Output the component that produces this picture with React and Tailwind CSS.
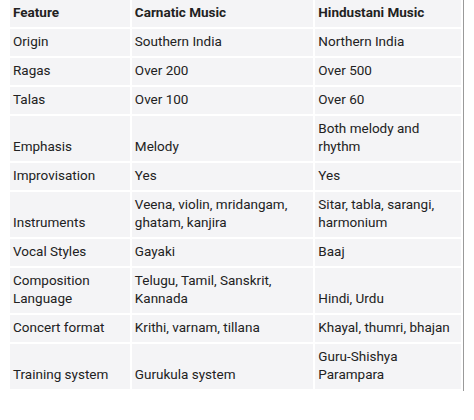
import React from 'react';

const rows = [
  ['Origin', 'Southern India', 'Northern India'],
  ['Ragas', 'Over 200', 'Over 500'],
  ['Talas', 'Over 100', 'Over 60'],
  ['Emphasis', 'Melody', 'Both melody and rhythm'],
  ['Improvisation', 'Yes', 'Yes'],
  ['Instruments', 'Veena, violin, mridangam, ghatam, kanjira', 'Sitar, tabla, sarangi, harmonium'],
  ['Vocal Styles', 'Gayaki', 'Baaj'],
  ['Composition Language', 'Telugu, Tamil, Sanskrit, Kannada', 'Hindi, Urdu'],
  ['Concert format', 'Krithi, varnam, tillana', 'Khayal, thumri, bhajan'],
  ['Training system', 'Gurukula system', 'Guru-Shishya Parampara'],
];

const cell = 'bg-[#f4f4f6] align-bottom text-left pl-[3px] pr-[3px] pt-[3px] pb-[6px] leading-[18px]';

const App = () => {
  return (
    <div className="w-[474px] h-[420px] bg-white overflow-hidden" style={{ fontFamily: 'Roboto, "Liberation Sans", sans-serif' }}>
      {/* comparison table */}
      <div className="ml-[8px] -mt-[2px] w-[456px] border-r border-[#9a9a9a]">
        <table className="border-separate border-spacing-[2px] text-[13.5px] text-[#222]">
          <colgroup>
            <col className="w-[120px]" />
            <col className="w-[182px]" />
            <col className="w-[146px]" />
          </colgroup>
          <thead>
            <tr>
              <th className={`${cell} font-bold`}>Feature</th>
              <th className={`${cell} font-bold`}>Carnatic Music</th>
              <th className={`${cell} font-bold`}>Hindustani Music</th>
            </tr>
          </thead>
          <tbody>
            {rows.map((r) => (
              <tr key={r[0]}>
                <td className={cell}>{r[0]}</td>
                <td className={cell}>{r[1]}</td>
                <td className={cell}>{r[2]}</td>
              </tr>
            ))}
          </tbody>
        </table>
      </div>
    </div>
  );
};

export default App;
